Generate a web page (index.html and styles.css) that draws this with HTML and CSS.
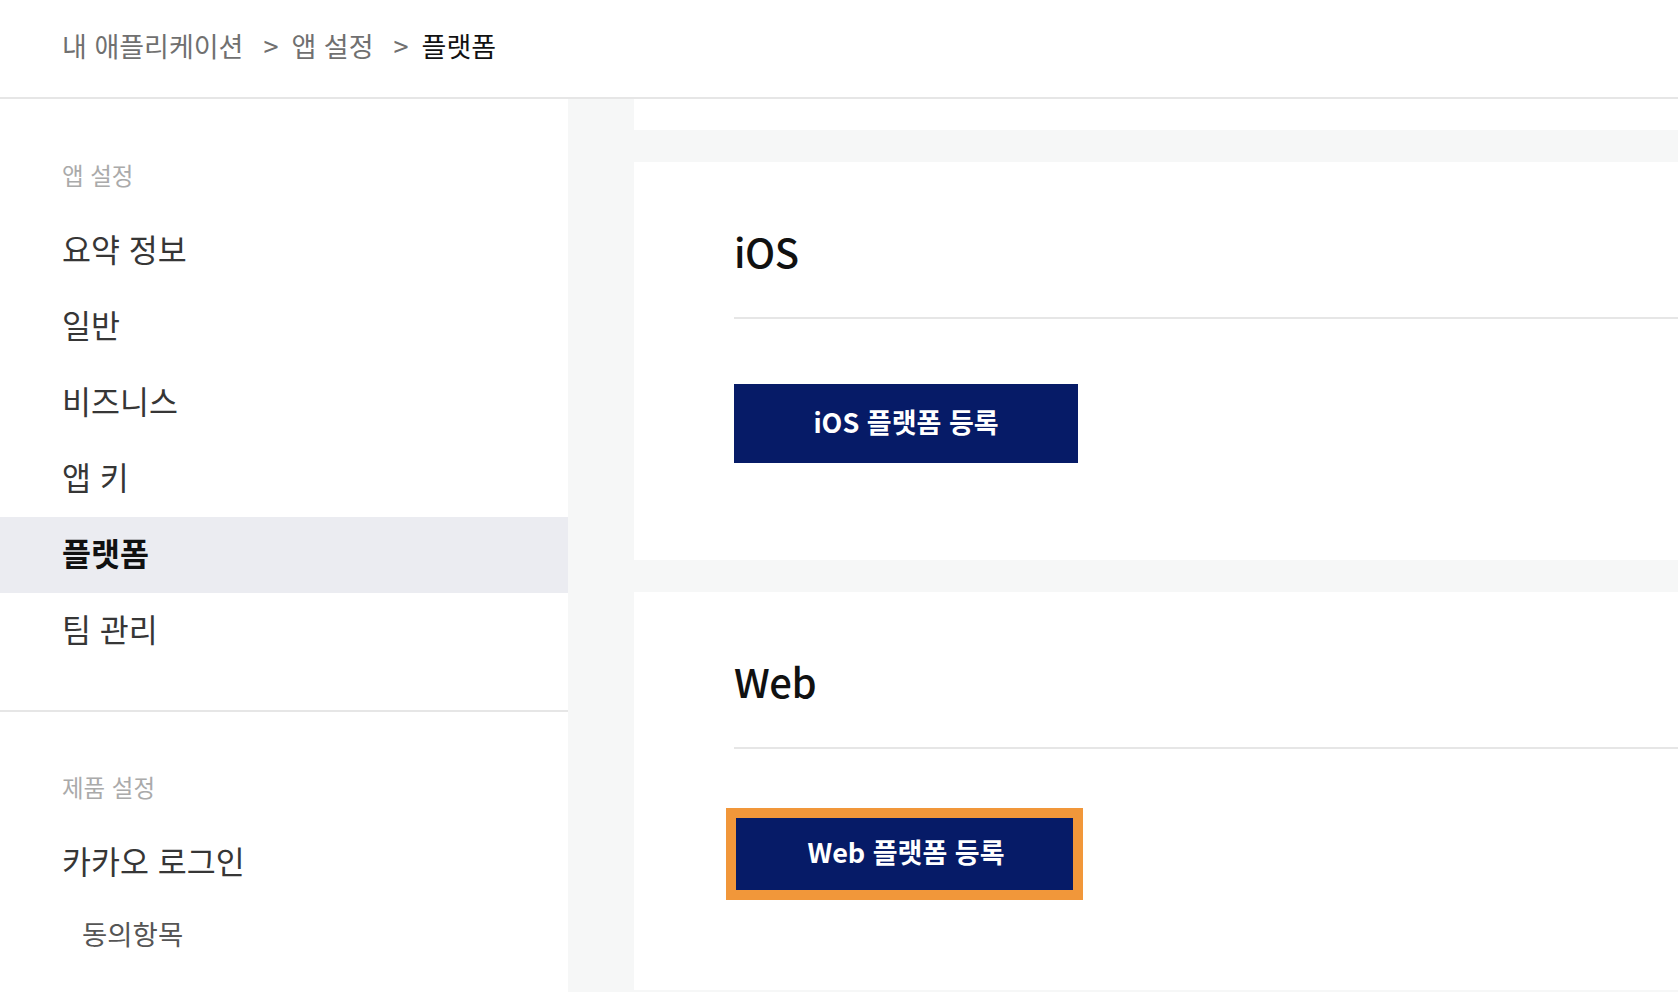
FILE: index.html
```html
<!DOCTYPE html>
<html lang="ko">
<head>
<meta charset="utf-8">
<title>플랫폼</title>
<link rel="stylesheet" href="styles.css">
</head>
<body>
<header class="topbar">
  <nav class="crumbs">
    <span class="crumb">내 애플리케이션</span>
    <span class="sep">&gt;</span>
    <span class="crumb">앱 설정</span>
    <span class="sep">&gt;</span>
    <span class="crumb current">플랫폼</span>
  </nav>
</header>
<div class="layout">
  <aside class="sidebar">
    <div class="group">
      <div class="group-label">앱 설정</div>
      <ul class="menu">
        <li class="item">요약 정보</li>
        <li class="item">일반</li>
        <li class="item">비즈니스</li>
        <li class="item">앱 키</li>
        <li class="item active">플랫폼</li>
        <li class="item">팀 관리</li>
      </ul>
    </div>
    <div class="group">
      <div class="group-label">제품 설정</div>
      <ul class="menu">
        <li class="item">카카오 로그인</li>
        <li class="item sub">동의항목</li>
      </ul>
    </div>
  </aside>
  <main class="content">
    <div class="card stub"></div>
    <section class="card platform">
      <h2 class="card-title">iOS</h2>
      <div class="btn-wrap">
        <button class="btn" type="button">iOS 플랫폼 등록</button>
      </div>
    </section>
    <section class="card platform">
      <h2 class="card-title">Web</h2>
      <div class="btn-wrap">
        <button class="btn" type="button">Web 플랫폼 등록</button>
        <span class="highlight"></span>
      </div>
    </section>
  </main>
</div>
</body>
</html>
```
FILE: styles.css
```css
html, body {
  margin: 0;
  height: 992px;
  overflow: hidden;
}
body {
  font-family: "Noto Sans CJK KR", "Noto Sans", sans-serif;
  background: #fff;
}
.topbar {
  box-sizing: border-box;
  height: 99px;
  border-bottom: 2px solid #e6e6e6;
  display: flex;
  align-items: center;
  padding: 0 0 6px 62px;
}
.crumbs {
  display: flex;
  align-items: center;
  font-size: 27px;
  color: #707070;
}
.sep {
  margin: 0 13px 0 20px;
}
.current {
  color: #111;
  font-weight: 400;
}
.layout {
  display: flex;
  height: 893px;
}
.sidebar {
  width: 568px;
  flex: none;
}
.group {
  padding: 60px 0 41px;
}
.group + .group {
  border-top: 2px solid #e6e6e6;
  padding-top: 59px;
}
.group-label {
  padding-left: 62px;
  font-size: 23.5px;
  line-height: 32px;
  color: #aaaaaa;
  margin-bottom: 22px;
}
.group + .group .group-label {
  margin-bottom: 22px;
}
.menu {
  list-style: none;
  margin: 0;
  padding: 0;
}
.item {
  box-sizing: border-box;
  height: 76px;
  display: flex;
  align-items: center;
  padding: 0 0 6px 62px;
  font-size: 31.5px;
  color: #363636;
}
.item.active {
  background: #ebecf1;
  font-weight: 700;
  color: #111;
}
.item.sub {
  height: 72px;
  padding-left: 82px;
  padding-bottom: 8px;
  font-size: 27.5px;
  color: #555;
}
.content {
  flex: 1;
  background: #f6f7f7;
  padding-left: 66px;
  display: flex;
  flex-direction: column;
  gap: 32px;
}
.card {
  background: #fff;
  flex: none;
}
.stub {
  height: 31px;
}
.platform {
  height: 398px;
  padding-left: 100px;
  box-sizing: border-box;
}
.card-title {
  margin: 0;
  padding: 59px 0 36px;
  font-size: 40px;
  line-height: 60px;
  letter-spacing: -0.5px;
  font-weight: 500;
  color: #111;
  border-bottom: 2px solid #e6e6e6;
}
.btn-wrap {
  position: relative;
  width: max-content;
  margin-top: 65px;
}
.btn {
  display: block;
  box-sizing: border-box;
  width: 344px;
  height: 79px;
  border: 0;
  padding: 0 0 4px;
  background: #061b67;
  color: #fff;
  font-family: inherit;
  font-size: 27px;
  font-weight: 700;
}
.highlight {
  position: absolute;
  left: -8px;
  top: -6px;
  width: 357px;
  height: 92px;
  border: 10px solid #f1973a;
  box-sizing: border-box;
  pointer-events: none;
}
```
